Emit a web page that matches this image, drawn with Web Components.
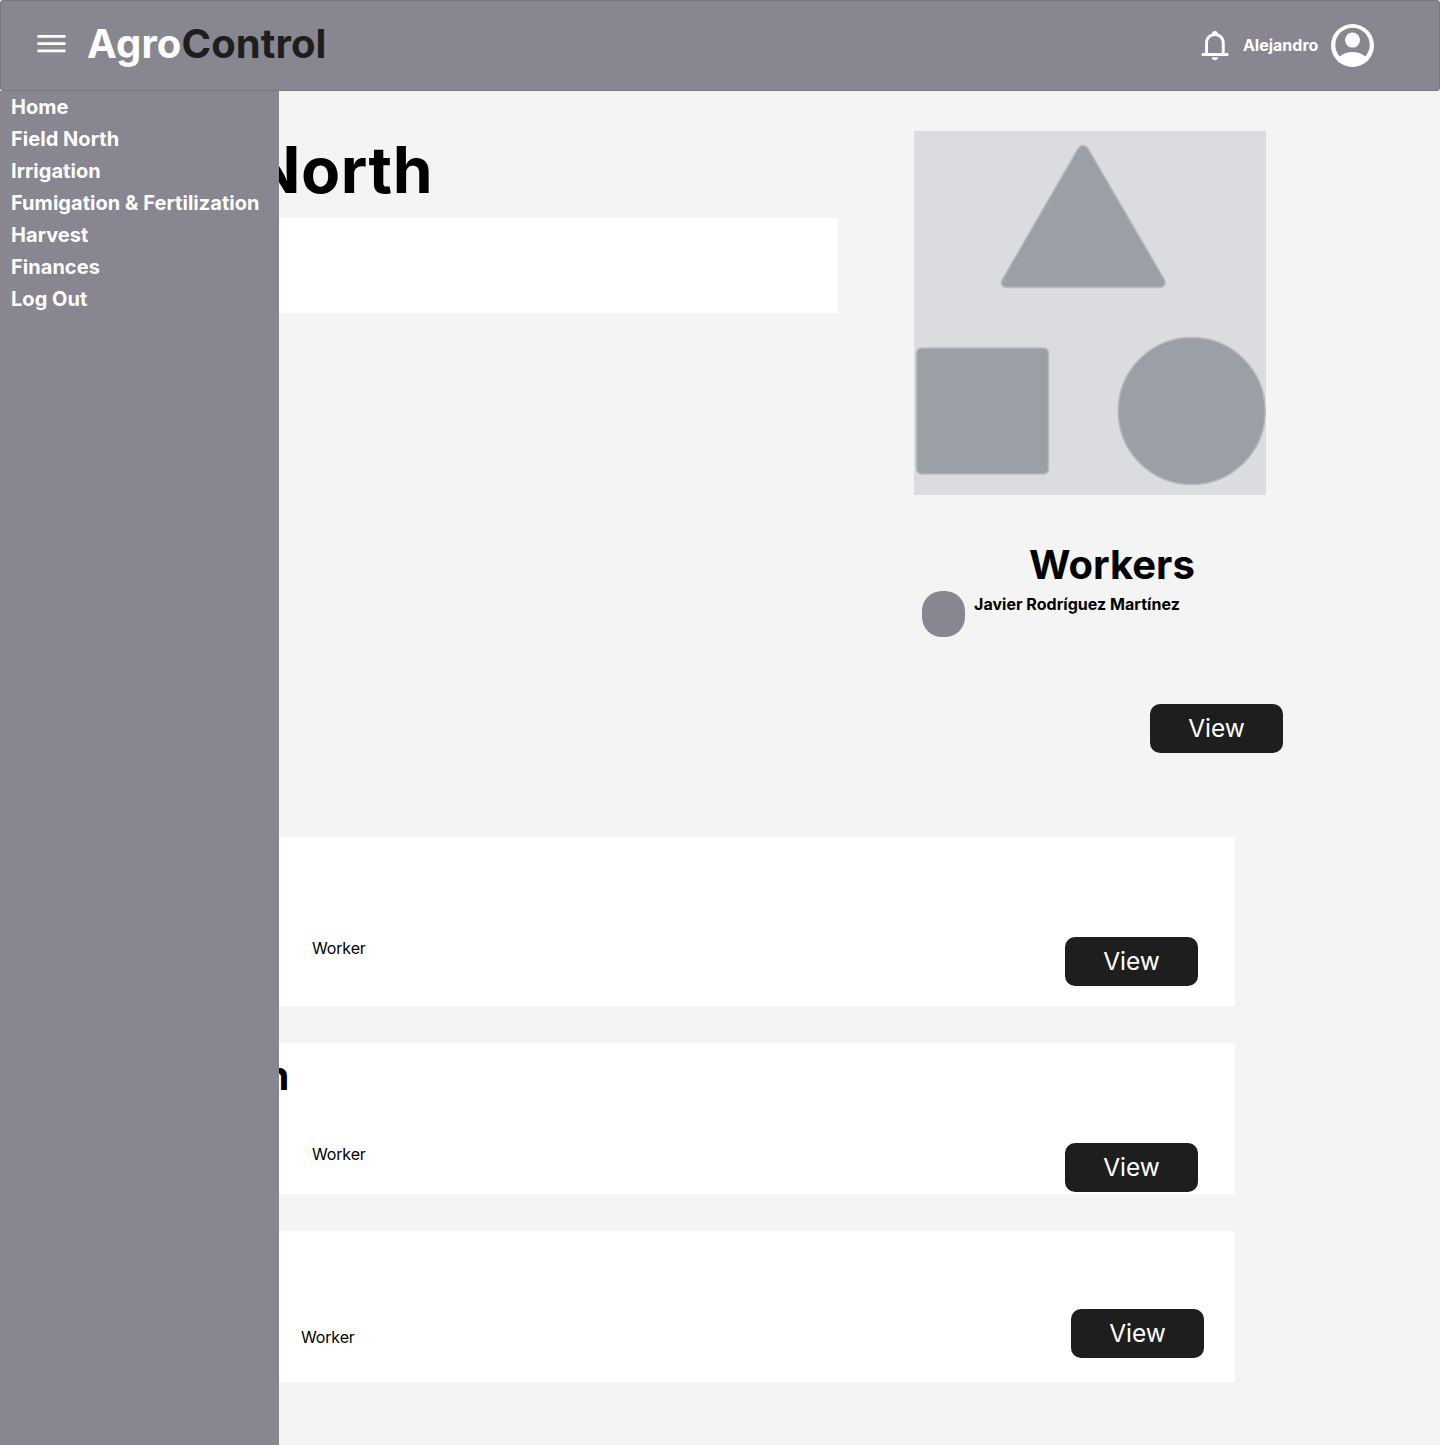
<!DOCTYPE html>
<html lang="en">
<head>
<meta charset="utf-8">
<title>AgroControl</title>
<style>
html,body{margin:0;padding:0}
body{font-family:Inter,"Liberation Sans",sans-serif;background:#f4f4f4;color:#000;--grey:#888690;--dark:#1e1e1e}
</style>
</head>
<body>
<agro-app></agro-app>
<script>
const define = (name, html) => customElements.define(name, class extends HTMLElement {
  constructor() {
    super();
    this.attachShadow({ mode: 'open' }).innerHTML = html;
  }
});

define('agro-header', `
<style>
:host{display:flex;box-sizing:border-box;height:91px;background:var(--grey);border:1px solid #7b7982;border-radius:3px;align-items:center;padding:0 65px 0 36px;color:#fff}
.menu{display:block;width:29px;height:20px;margin:-4px 21px 0 0}
.logo{font-weight:700;font-size:40px;line-height:48px;letter-spacing:.1px;margin-top:-4px}
.logo span{color:var(--dark)}
.user{display:flex;align-items:center;margin-left:auto;font-weight:700;font-size:16px;line-height:20px}
.user span{margin-top:-2px}
.bell{width:28px;height:30px;margin-right:14px}
.avatar{width:43px;height:43px;margin-left:12.7px}
svg{display:block}
</style>
<svg class="menu" viewBox="0 0 29 20" fill="#fff"><path d="M.5 1.1h28v2.7H.5zM.5 8.300h28v2.700H.5zM.5 15.500h28v2.700H.5z"/></svg>
<div class="logo">Agro<span>Control</span></div>
<div class="user">
<svg class="bell" viewBox="-.4 0 28 30" fill="#fff"><path fill-rule="evenodd" d="M.3 25v-2.900h3.400V11.900c0-4.600 2.900-8.200 7-9.300v-.4C10.700.9 12 0 13.500 0s2.800.9 2.800 2.200v.4c4.100 1.100 7 4.700 7 9.300v10.200h3.700V25zM6.600 22.100h13.800V11.900c0-3.900-3-7-6.900-7s-6.900 3.100-6.900 7z"/><path d="M10.300 26.300h6.400c0 1.700-1.500 2.900-3.200 2.900s-3.200-1.200-3.200-2.900z"/></svg>
<span>Alejandro</span>
<svg class="avatar" viewBox="0 0 43 43"><path fill="#fff" fill-rule="evenodd" d="M21.500 0a21.500 21.500 0 1 0 0 43 21.500 21.500 0 0 0 0-43zM8.700 32.400a17.200 17.200 0 1 1 25.600 0c-3.700-2.900-8.100-4.400-12.800-4.400s-9.100 1.500-12.800 4.400zM21.500 8.600a7.500 7.500 0 1 0 0 15 7.500 7.500 0 0 0 0-15z"/></svg>
</div>`);

define('agro-drawer', `
<style>
:host{display:flex;flex-direction:column;box-sizing:border-box;width:279px;background:var(--grey);color:#fff;padding:0 11px;font-weight:700;font-size:20px;line-height:32px;letter-spacing:.04px}
</style><slot></slot>`);

define('agro-button', `
<style>
:host{display:flex;align-items:center;justify-content:center;width:133px;height:49px;flex:none;border-radius:10px;background:var(--dark);color:#fff;font-size:24.5px;line-height:29px}
</style><slot></slot>`);

define('shape-picture', `
<style>:host{display:block;width:352px;height:364px}svg{display:block}</style>
<svg width="352" height="364" viewBox="0 0 352 364"><rect width="352" height="364" fill="#dbdcdf"/>
<g fill="#9b9fa6" stroke="#b6babd" stroke-width="1.500">
<path d="M163.600 18.300Q169 10.500 174.500 18.300L250.600 149Q252.500 156 246 156.500H93Q86 156 87.800 149.500z"/>
<rect x="2.500" y="217" width="132" height="126" rx="5"/>
<circle cx="277.700" cy="280" r="73.500"/></g></svg>`);

define('worker-panel', `
<style>
:host{display:flex;flex-direction:column;width:369px}
h2{margin:46px 0 0 115px;font-size:40px;line-height:48px;font-weight:700}
.row{display:flex;margin:2px 0 67px 8px;gap:9px}
.dot{width:43px;height:46px;border-radius:20px;background:var(--grey)}
.name{font-size:16px;line-height:20px;font-weight:700;margin-top:3px;letter-spacing:.03px}
agro-button{align-self:flex-end}
</style>
<shape-picture></shape-picture>
<h2>Workers</h2>
<div class="row"><div class="dot"></div><div class="name"><slot></slot></div></div>
<agro-button>View</agro-button>`);

define('task-card', `
<style>
:host{display:flex;box-sizing:border-box;justify-content:space-between;align-items:flex-start;height:151px;background:#fff;padding:0 37px 0 27px}
.text{display:flex;flex-direction:column}
.title{width:185.500px;height:47px;margin-top:9px;font-weight:700;font-size:40px;line-height:48px;text-align:right}
.role{font-size:16px;line-height:20px;letter-spacing:-.15px;margin:var(--role-top,45px) 0 0 var(--role-left,208px)}
agro-button{margin-top:var(--button-top,100px)}
</style>
<div class="text"><div class="title"><slot></slot></div><div class="role">Worker</div></div>
<agro-button>View</agro-button>`);

define('agro-app', `
<style>
:host{display:flex;flex-direction:column;position:relative;width:1440px;height:1445px;overflow:hidden}
agro-header{flex:none}
agro-drawer{position:absolute;left:0;top:91px;bottom:0;z-index:1}
main{display:flex;flex-direction:column;padding:40px 0 0 77px}
.top{display:flex;gap:76px;height:706px}
.field{width:761px}
h1{margin:0;width:356px;text-align:right;font-size:64px;line-height:78px;letter-spacing:.5px;height:87px;font-weight:700}
.panel{height:95px;background:#fff}
.cards{display:flex;flex-direction:column;gap:37px;width:1158px}
.cards .tall{height:169px}
.cards .last{padding-right:31px;--button-top:78px;--role-top:40px;--role-left:197px}
</style>
<agro-header></agro-header>
<agro-drawer><span>Home</span><span>Field North</span><span>Irrigation</span><span>Fumigation &amp; Fertilization</span><span>Harvest</span><span>Finances</span><span>Log Out</span></agro-drawer>
<main>
<section class="top">
<div class="field"><h1>North</h1><div class="panel"></div></div>
<worker-panel>Javier Rodríguez Martínez</worker-panel>
</section>
<section class="cards">
<task-card class="tall"></task-card>
<task-card>n</task-card>
<task-card class="last"></task-card>
</section>
</main>`);
</script>
</body>
</html>
